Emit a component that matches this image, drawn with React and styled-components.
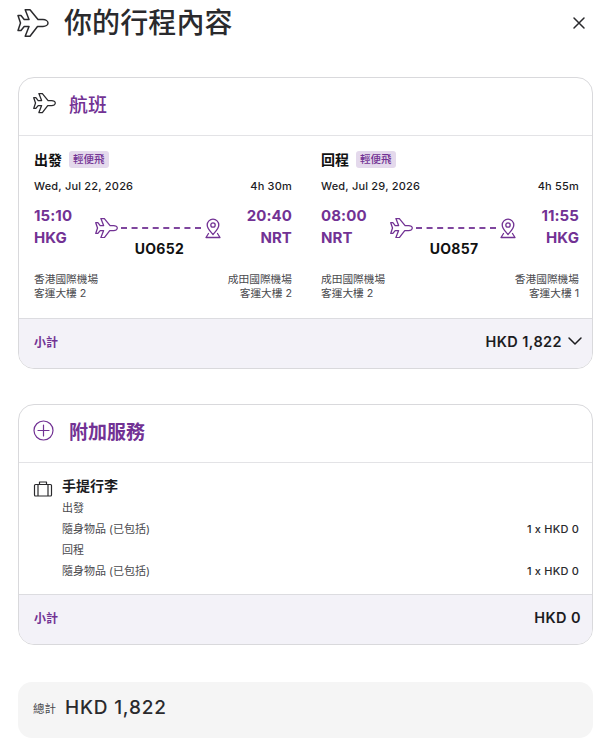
import styled, { createGlobalStyle } from "styled-components";

const PURPLE = "#723294";

const GlobalStyle = createGlobalStyle`
  html, body { margin: 0; padding: 0; background: #fff; }
  body {
    font-family: Inter, "Noto Sans CJK TC", sans-serif;
    color: #1c1c1f;
  }
`;

const Page = styled.div`
  width: 600px;
  height: 754px;
  overflow: hidden;
  box-sizing: border-box;
  padding: 0 18px 0 18px;
`;

const TopBar = styled.div`
  display: flex;
  align-items: center;
  height: 46px;
  margin-bottom: 31px;
`;

const PageTitle = styled.h1`
  flex: 1;
  margin: 0 0 0 15px;
  font-size: 28px;
  font-weight: 500;
  line-height: 46px;
  letter-spacing: 0.1px;
  color: #2a2a2d;
`;

const CloseButton = styled.button`
  display: flex;
  border: 0;
  padding: 0;
  background: none;
  margin-right: -5px;
  color: #2a2a2d;
`;

const Card = styled.section`
  border: 1px solid #d9d9dc;
  border-radius: 16px;
  overflow: hidden;
  margin-bottom: 35px;
  width: 575px;
  box-sizing: border-box;
`;

const CardHeader = styled.div`
  display: flex;
  align-items: center;
  gap: ${(p) => p.$gap}px;
  height: 58px;
  box-sizing: border-box;
  padding: 0 14px 6px;
  border-bottom: 1px solid #e3e3e6;
`;

const CardTitle = styled.h2`
  margin: 0;
  font-size: 19px;
  font-weight: ${(p) => (p.$strong ? 700 : 500)};
  color: ${PURPLE};
`;

const Flights = styled.div`
  display: grid;
  grid-template-columns: 258px 258px;
  column-gap: 29px;
  padding: 13px 14px 0 15px;
  height: 182px;
  box-sizing: border-box;
`;

const LegTop = styled.div`
  display: flex;
  align-items: center;
  gap: 7px;
  height: 20px;
`;

const LegName = styled.span`
  font-size: 14px;
  font-weight: 700;
  color: #111;
`;

const Tag = styled.span`
  background: #e4d9ec;
  color: ${PURPLE};
  border-radius: 3px;
  font-size: 10.5px;
  font-weight: 500;
  line-height: 17px;
  padding: 0 4px;
`;

const DateRow = styled.div`
  display: flex;
  justify-content: space-between;
  margin-top: 9px;
  font-size: 11px;
  font-weight: 500;
  line-height: 16px;
  letter-spacing: 0.2px;
  color: #1c1c1f;
`;

const Route = styled.div`
  display: flex;
  justify-content: space-between;
  margin-top: 11px;
`;

const Stop = styled.div`
  display: flex;
  flex-direction: column;
  align-items: ${(p) => (p.$end ? "flex-end" : "flex-start")};
  font-size: 15px;
  font-weight: 700;
  line-height: 22px;
  letter-spacing: 0.1px;
  color: ${PURPLE};
`;

const Path = styled.div`
  display: flex;
  flex-direction: column;
  align-items: center;
  margin-left: -2px;
`;

const PathIcons = styled.div`
  display: flex;
  align-items: center;
  gap: 3px;
  height: 24px;
  margin-top: 11px;
`;

const Dash = styled.div`
  width: 80px;
  border-top: 2px dashed ${PURPLE};
  opacity: 0.9;
`;

const FlightNo = styled.div`
  margin-left: 2px;
  font-size: 14px;
  font-weight: 700;
  line-height: 18px;
  letter-spacing: 0.3px;
  color: #111;
`;

const Airports = styled.div`
  display: flex;
  justify-content: space-between;
  margin-top: 15px;
  font-size: 10.7px;
  line-height: 14px;
  color: #4a4a4e;
`;

const Airport = styled.div`
  text-align: ${(p) => (p.$end ? "right" : "left")};
`;

const Subtotal = styled.div`
  display: flex;
  align-items: center;
  justify-content: space-between;
  height: 50px;
  box-sizing: border-box;
  padding: 0 ${(p) => p.$right}px 5px 15px;
  background: #f3f2f8;
  border-top: 1px solid #dcdce0;
`;

const SubLabel = styled.span`
  font-size: 12px;
  font-weight: 700;
  color: ${PURPLE};
`;

const SubAmount = styled.span`
  display: flex;
  align-items: center;
  gap: 5px;
  font-size: 14.5px;
  font-weight: 600;
  letter-spacing: 0.4px;
  color: #1c1c1f;
`;

const Extras = styled.div`
  display: flex;
  gap: 9px;
  padding: 13px 13px 0 14px;
  height: 131px;
  box-sizing: border-box;
`;

const ExtrasBody = styled.div`
  flex: 1;
`;

const ExtrasTitle = styled.div`
  margin-bottom: 2px;
  font-size: 14px;
  font-weight: 700;
  line-height: 20px;
  color: #1c1c1f;
`;

const ExtrasRow = styled.div`
  display: flex;
  justify-content: space-between;
  font-size: 11px;
  line-height: 21px;
  color: #4a4a4e;
`;

const Price = styled.span`
  color: #2a2a2d;
  font-weight: 500;
  letter-spacing: 0.2px;
`;

const Total = styled.div`
  display: flex;
  align-items: center;
  gap: 9px;
  width: 575px;
  height: 56px;
  box-sizing: border-box;
  padding: 0 15px 5px;
  margin-top: 37px;
  background: #f5f5f5;
  border-radius: 14px;
`;

const TotalLabel = styled.span`
  font-size: 11.5px;
  color: #4a4a4e;
`;

const TotalAmount = styled.span`
  font-size: 19px;
  font-weight: 500;
  letter-spacing: 0.8px;
  color: #2a2a2d;
`;

const LuggageIcon = styled.svg`
  flex: none;
  margin-top: 3px;
`;

const TitlePlane = styled.span`
  display: flex;
  margin-left: -1px;
`;

function Plane({ size, color = "currentColor", width = 1.6 }) {
  return (
    <svg width={size} height={size * 0.875} viewBox="0 0 32 28" fill="none" stroke={color} strokeWidth={width} strokeLinejoin="round" strokeLinecap="round">
      <path d="M31 14c0-2-2.500-3.500-5-3.500h-5L13 .8H8.200l3.800 9.700H7.200L4 6.500H1l2.500 7.500L1 21.500h3l3.200-4H12l-3.800 9.700H13l7.500-9.700H26c2.500 0 5-1.500 5-3.500z" />
    </svg>
  );
}

function Pin() {
  return (
    <svg width="18" height="21" viewBox="0 0 18 21" fill="none" stroke={PURPLE} strokeWidth="1.300" strokeLinecap="round" strokeLinejoin="round">
      <path d="M9 16.500C6 13 3.200 10.500 3.200 7a5.800 5.800 0 0 1 11.600 0c0 3.500-2.800 6-5.800 9.500z" />
      <circle cx="9" cy="7" r="2.200" />
      <path d="M4.500 15.500 2 19.500h14l-2.500-4" />
    </svg>
  );
}

function Leg({ name, date, duration, from, to, flight, fromAirport, toAirport, fromTerminal, toTerminal }) {
  return (
    <div>
      <LegTop>
        <LegName>{name}</LegName>
        <Tag>輕便飛</Tag>
      </LegTop>
      <DateRow>
        <span>{date}</span>
        <span>{duration}</span>
      </DateRow>
      <Route>
        <Stop>
          <span>{from[0]}</span>
          <span>{from[1]}</span>
        </Stop>
        <Path>
          <PathIcons>
            <Plane size={23} color={PURPLE} width={1.8} />
            <Dash />
            <Pin />
          </PathIcons>
          <FlightNo>{flight}</FlightNo>
        </Path>
        <Stop $end>
          <span>{to[0]}</span>
          <span>{to[1]}</span>
        </Stop>
      </Route>
      <Airports>
        <Airport>{fromAirport}<br />{fromTerminal}</Airport>
        <Airport $end>{toAirport}<br />{toTerminal}</Airport>
      </Airports>
    </div>
  );
}

export default function App() {
  return (
    <Page>
      <GlobalStyle />
      <TopBar>
        <TitlePlane>
          <Plane size={32} color="#2a2a2d" width={1.5} />
        </TitlePlane>
        <PageTitle>你的行程內容</PageTitle>
        <CloseButton aria-label="close">
          <svg width="16" height="16" viewBox="0 0 16 16" fill="none" stroke="currentColor" strokeWidth="1.500" strokeLinecap="round">
            <path d="M3 3l10 10M13 3L3 13" />
          </svg>
        </CloseButton>
      </TopBar>

      <Card>
        <CardHeader $gap={13}>
          <Plane size={23} color="#2a2a2d" width={1.8} />
          <CardTitle>航班</CardTitle>
        </CardHeader>
        <Flights>
          <Leg name="出發" date="Wed, Jul 22, 2026" duration="4h 30m" from={["15:10", "HKG"]} to={["20:40", "NRT"]} flight="UO652" fromAirport="香港國際機場" toAirport="成田國際機場" fromTerminal="客運大樓 2" toTerminal="客運大樓 2" />
          <Leg name="回程" date="Wed, Jul 29, 2026" duration="4h 55m" from={["08:00", "NRT"]} to={["11:55", "HKG"]} flight="UO857" fromAirport="成田國際機場" toAirport="香港國際機場" fromTerminal="客運大樓 2" toTerminal="客運大樓 1" />
        </Flights>
        <Subtotal $right={9}>
          <SubLabel>小計</SubLabel>
          <SubAmount>
            HKD 1,822
            <svg width="16" height="16" viewBox="0 0 16 16" fill="none" stroke="currentColor" strokeWidth="1.500" strokeLinecap="round" strokeLinejoin="round">
              <path d="M2 5l6 6 6-6" />
            </svg>
          </SubAmount>
        </Subtotal>
      </Card>

      <Card>
        <CardHeader $gap={15}>
          <svg width="21" height="21" viewBox="0 0 21 21" fill="none" stroke={PURPLE} strokeWidth="1.200" strokeLinecap="round">
            <circle cx="10.500" cy="10.500" r="9.500" />
            <path d="M10.500 5v11M5 10.500h11" />
          </svg>
          <CardTitle $strong>附加服務</CardTitle>
        </CardHeader>
        <Extras>
          <LuggageIcon width="20" height="20" viewBox="0 0 20 20" fill="none" stroke="#2a2a2d" strokeWidth="1.200" strokeLinejoin="round">
            <rect x="1.500" y="5.500" width="17" height="11.500" rx="1" />
            <path d="M6.500 5.500V3h7v2.500M5 5.500V17M15 5.500V17" />
          </LuggageIcon>
          <ExtrasBody>
            <ExtrasTitle>手提行李</ExtrasTitle>
            <ExtrasRow><span>出發</span></ExtrasRow>
            <ExtrasRow><span>隨身物品 (已包括)</span><Price>1 x HKD 0</Price></ExtrasRow>
            <ExtrasRow><span>回程</span></ExtrasRow>
            <ExtrasRow><span>隨身物品 (已包括)</span><Price>1 x HKD 0</Price></ExtrasRow>
          </ExtrasBody>
        </Extras>
        <Subtotal $right={11}>
          <SubLabel>小計</SubLabel>
          <SubAmount>HKD 0</SubAmount>
        </Subtotal>
      </Card>

      <Total>
        <TotalLabel>總計</TotalLabel>
        <TotalAmount>HKD 1,822</TotalAmount>
      </Total>
    </Page>
  );
}
